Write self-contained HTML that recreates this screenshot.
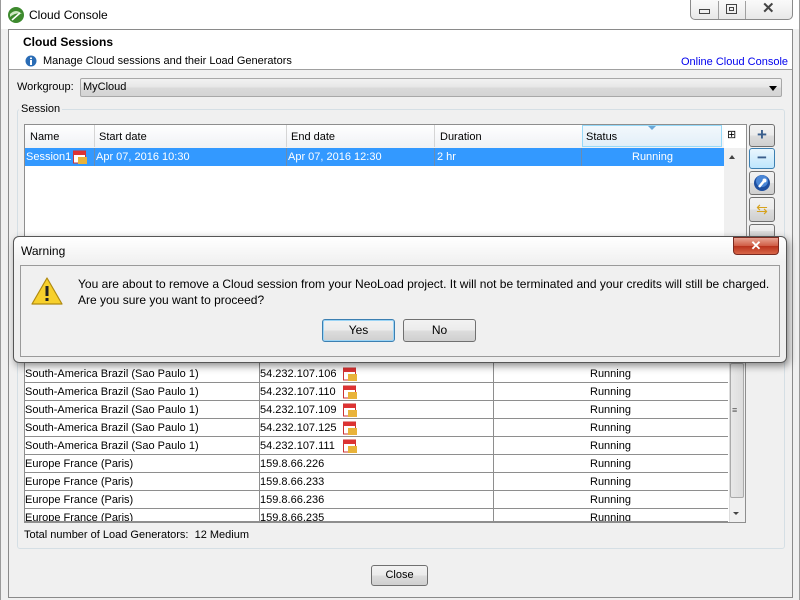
<!DOCTYPE html>
<html><head><meta charset="utf-8"><style>
*{box-sizing:border-box;margin:0;padding:0}
body{width:800px;height:600px;overflow:hidden;background:#f0f0f0;font-family:"Liberation Sans",sans-serif;font-size:11px;color:#000;position:relative}
.a{position:absolute}
.t{position:absolute;white-space:nowrap;line-height:14px}
.btn{position:absolute;border:1px solid #707070;border-radius:3px;background:linear-gradient(#f2f2f2,#ebebeb 50%,#dddddd 51%,#cfcfcf);text-align:center}
</style></head><body>
<div class="a" style="left:0;top:0;width:800px;height:29px;background:#fff"></div>
<div class="a" style="left:0;top:0;width:1px;height:600px;background:#9a9a9a"></div>
<div class="a" style="left:799px;top:0;width:1px;height:600px;background:#9a9a9a"></div>
<svg class="a" style="left:7px;top:6px" width="18" height="18"><circle cx="9" cy="9" r="8" fill="#3d8a2e"/><path d="M3 8 Q9 2 15 8 Q9 6 3 11Z" fill="#cfe8c4"/><path d="M5 14 L13 7" stroke="#fff" stroke-width="1.5"/></svg>
<div class="t" style="left:29px;top:8px;font-size:12px">Cloud Console</div>
<div class="a" style="left:690px;top:0;width:103px;height:20px;border:1px solid #8a8a8a;border-top:none;border-radius:0 0 5px 5px;background:linear-gradient(#fafafa,#e8e8e8)"></div>
<div class="a" style="left:718px;top:1px;width:1px;height:18px;background:#a0a0a0"></div>
<div class="a" style="left:745px;top:1px;width:1px;height:18px;background:#a0a0a0"></div>
<div class="a" style="left:699px;top:9px;width:11px;height:5px;border:1px solid #444"></div>
<div class="a" style="left:726px;top:4px;width:11px;height:10px;border:1px solid #444"><div class="a" style="left:2px;top:2px;width:5px;height:4px;border:1px solid #444"></div></div>
<div class="t" style="left:762px;top:2px;font-size:15px;color:#444;font-weight:bold">✕</div>
<div class="a" style="left:8px;top:29px;width:785px;height:569px;border:1px solid #8a8a8a;background:#f0f0f0"></div>
<div class="a" style="left:9px;top:30px;width:783px;height:40px;background:#fff;border-bottom:1px solid #a0a0a0"></div>
<div class="t" style="left:23px;top:35px;font-weight:bold;font-size:12px">Cloud Sessions</div>
<svg class="a" style="left:25px;top:55px" width="12" height="12"><circle cx="6" cy="6" r="5.5" fill="#2a6cb5"/><rect x="5" y="5" width="2" height="5" fill="#fff"/><rect x="5" y="2.5" width="2" height="1.6" fill="#fff"/></svg>
<div class="t" style="left:43px;top:54px">Manage Cloud sessions and their Load Generators</div>
<div class="t" style="left:681px;top:55px;color:#0000ee">Online Cloud Console</div>
<div class="t" style="left:17px;top:80px">Workgroup:</div>
<div class="a" style="left:80px;top:78px;width:702px;height:19px;border:1px solid #a8a8a8;border-radius:2px;background:linear-gradient(#f2f2f2,#e6e6e6 50%,#dadada 51%,#d4d4d4)"></div>
<div class="t" style="left:83px;top:80px">MyCloud</div>
<div class="a" style="left:769px;top:86px;border-left:4px solid transparent;border-right:4px solid transparent;border-top:5px solid #000"></div>
<div class="a" style="left:17px;top:109px;width:768px;height:440px;border:1px solid #d5dfe5;border-radius:3px"></div>
<div class="t" style="left:19px;top:102px;background:#f0f0f0;padding:0 2px">Session</div>
<div class="a" style="left:24px;top:124px;width:723px;height:120px;border:1px solid #8e8e8e;background:#fff"></div>
<div class="a" style="left:25px;top:125px;width:699px;height:23px;background:linear-gradient(#fff,#f7f8fa 50%,#f1f2f4)"></div>
<div class="a" style="left:582px;top:125px;width:140px;height:22px;background:linear-gradient(#f2f8fc,#e2eff8);border:1px solid #96d9f9"></div>
<div class="a" style="left:94px;top:125px;width:1px;height:22px;background:#d5d5d5"></div>
<div class="a" style="left:286px;top:125px;width:1px;height:22px;background:#d5d5d5"></div>
<div class="a" style="left:434px;top:125px;width:1px;height:22px;background:#d5d5d5"></div>
<div class="a" style="left:648px;top:126px;border-left:4px solid transparent;border-right:4px solid transparent;border-top:4px solid #6aa8d8"></div>
<div class="t" style="left:30px;top:130px">Name</div>
<div class="t" style="left:99px;top:130px">Start date</div>
<div class="t" style="left:291px;top:130px">End date</div>
<div class="t" style="left:440px;top:130px">Duration</div>
<div class="t" style="left:586px;top:130px">Status</div>
<div class="t" style="left:727px;top:128px;font-size:11px">⊞</div>
<div class="a" style="left:25px;top:148px;width:699px;height:18px;background:#3399ff"></div>
<div class="a" style="left:94px;top:148px;width:1px;height:18px;background:#6a8cb0"></div>
<div class="a" style="left:286px;top:148px;width:1px;height:18px;background:#6a8cb0"></div>
<div class="a" style="left:434px;top:148px;width:1px;height:18px;background:#6a8cb0"></div>
<div class="a" style="left:581px;top:148px;width:1px;height:18px;background:#6a8cb0"></div>
<div class="t" style="left:26px;top:150px;color:#fff">Session1</div>
<svg class="a" style="left:73px;top:149px" width="14" height="15"><rect x="0.5" y="2" width="12" height="12" fill="#fff" stroke="#c33"/><rect x="0.5" y="2" width="12" height="4" fill="#d33"/><rect x="5" y="8" width="9" height="7" fill="#e9b33a"/></svg>
<div class="t" style="left:96px;top:150px;color:#fff">Apr 07, 2016 10:30</div>
<div class="t" style="left:288px;top:150px;color:#fff">Apr 07, 2016 12:30</div>
<div class="t" style="left:437px;top:150px;color:#fff">2 hr</div>
<div class="t" style="left:632px;top:150px;color:#fff">Running</div>
<div class="a" style="left:724px;top:148px;width:22px;height:96px;background:#f0f0f0"></div>
<div class="a" style="left:729px;top:155px;border-left:3px solid transparent;border-right:3px solid transparent;border-bottom:4px solid #444"></div>
<div class="btn" style="left:749px;top:124px;width:26px;height:23px;font-size:17px;line-height:19px;color:#3a5e8c;font-weight:bold">+</div>
<div class="btn" style="left:749px;top:148px;width:26px;height:21px;font-size:17px;line-height:17px;color:#3a5e8c;font-weight:bold;border-color:#3c7fb1;background:linear-gradient(#eaf6fd,#bee6fd)">−</div>
<div class="btn" style="left:749px;top:171px;width:26px;height:24px"><svg width="20" height="20" style="margin-top:1px"><circle cx="10" cy="10" r="8" fill="#1e4fa0"/><circle cx="10" cy="8" r="6" fill="#4a86d6"/><path d="M7 14 L12 8" stroke="#fff" stroke-width="2.5"/><circle cx="12.5" cy="7.5" r="2" fill="#fff"/></svg></div>
<div class="btn" style="left:749px;top:197px;width:26px;height:25px;color:#d6a21e;font-size:14px;line-height:22px">⇆</div>
<div class="btn" style="left:749px;top:224px;width:26px;height:14px"></div>
<div class="a" style="left:24px;top:352px;width:722px;height:171px;border:1px solid #8e8e8e;background:#fff;overflow:hidden">
<div class="a" style="left:234px;top:0;width:1px;height:171px;background:#8e8e8e"></div>
<div class="a" style="left:468px;top:0;width:1px;height:171px;background:#8e8e8e"></div>
<div class="a" style="left:704px;top:0;width:17px;height:171px;background:#f0f0f0;border-left:1px solid #ddd"></div>
<div class="a" style="left:705px;top:10px;width:14px;height:135px;background:linear-gradient(90deg,#e8e8e8,#dcdcdc);border:1px solid #aaa;border-radius:2px"></div>
<div class="t" style="left:707px;top:50px;font-size:9px;color:#555">≡</div>
<div class="a" style="left:708px;top:159px;border-left:3px solid transparent;border-right:3px solid transparent;border-top:3px solid #444"></div>
</div>
<div id="rows"></div>
<div class="t" style="left:24px;top:528px">Total number of Load Generators:&nbsp; 12 Medium</div>
<div class="btn" style="left:371px;top:565px;width:57px;height:21px;line-height:19px">Close</div>
<div class="a" style="left:13px;top:236px;width:774px;height:127px;border:1px solid #555;border-radius:6px;background:linear-gradient(#fff,#f1f1f1 25px,#eeeeee);box-shadow:2px 3px 8px rgba(0,0,0,.45)"></div>
<div class="t" style="left:21px;top:244px;font-size:12px">Warning</div>
<div class="a" style="left:733px;top:237px;width:46px;height:18px;border:1px solid #7a2a20;border-radius:0 0 4px 4px;background:linear-gradient(#e8a493,#cf5c44 50%,#b8321c 51%,#d86648);color:#fff;text-align:center;font-weight:bold;font-size:13px;line-height:16px">✕</div>
<div class="a" style="left:20px;top:265px;width:760px;height:92px;border:1px solid #9a9a9a;background:#f0f0f0"></div>
<svg class="a" style="left:30px;top:276px" width="34" height="30"><path d="M17 2 L32 28 L2 28 Z" fill="#f7d02c" stroke="#b08a10" stroke-width="1.2" stroke-linejoin="round"/><rect x="15.5" y="10" width="3" height="10" fill="#222"/><rect x="15.5" y="22" width="3" height="3" fill="#222"/></svg>
<div class="t" style="left:78px;top:277px;font-size:12px">You are about to remove a Cloud session from your NeoLoad project. It will not be terminated and your credits will still be charged.</div>
<div class="t" style="left:78px;top:293px;font-size:12px">Are you sure you want to proceed?</div>
<div class="btn" style="left:322px;top:319px;width:73px;height:23px;line-height:21px;font-size:12px;border-color:#3c7fb1;box-shadow:inset 0 0 0 1px #9bd4f5">Yes</div>
<div class="btn" style="left:403px;top:319px;width:73px;height:23px;line-height:21px;font-size:12px">No</div>
<script>
var d=[["South-America Brazil (Sao Paulo 1)","54.232.107.106",1],["South-America Brazil (Sao Paulo 1)","54.232.107.110",1],["South-America Brazil (Sao Paulo 1)","54.232.107.109",1],["South-America Brazil (Sao Paulo 1)","54.232.107.125",1],["South-America Brazil (Sao Paulo 1)","54.232.107.111",1],["Europe France (Paris)","159.8.66.226",0],["Europe France (Paris)","159.8.66.233",0],["Europe France (Paris)","159.8.66.236",0],["Europe France (Paris)","159.8.66.235",0]];
var h='';
d.forEach(function(r,i){var top=365+i*18;var hh=top+18>522?522-top:18;
h+='<div class="a" style="left:25px;top:'+top+'px;width:703px;height:'+hh+'px;overflow:hidden;border-bottom:1px solid #8e8e8e">'+
'<span class="t" style="left:0;top:2px">'+r[0]+'</span><span class="t" style="left:235px;top:2px">'+r[1]+'</span>'+
(r[2]?'<svg class="a" style="left:318px;top:1px" width="14" height="15"><rect x="0.5" y="2" width="12" height="12" fill="#fff" stroke="#c33"/><rect x="0.5" y="2" width="12" height="4" fill="#d33"/><rect x="5" y="8" width="9" height="7" fill="#e9b33a"/></svg>':'')+
'<span class="t" style="left:565px;top:2px">Running</span>'+
'<div class="a" style="left:234px;top:0;width:1px;height:18px;background:#8e8e8e"></div><div class="a" style="left:468px;top:0;width:1px;height:18px;background:#8e8e8e"></div></div>';});
document.getElementById('rows').innerHTML=h;
</script>
</body></html>
